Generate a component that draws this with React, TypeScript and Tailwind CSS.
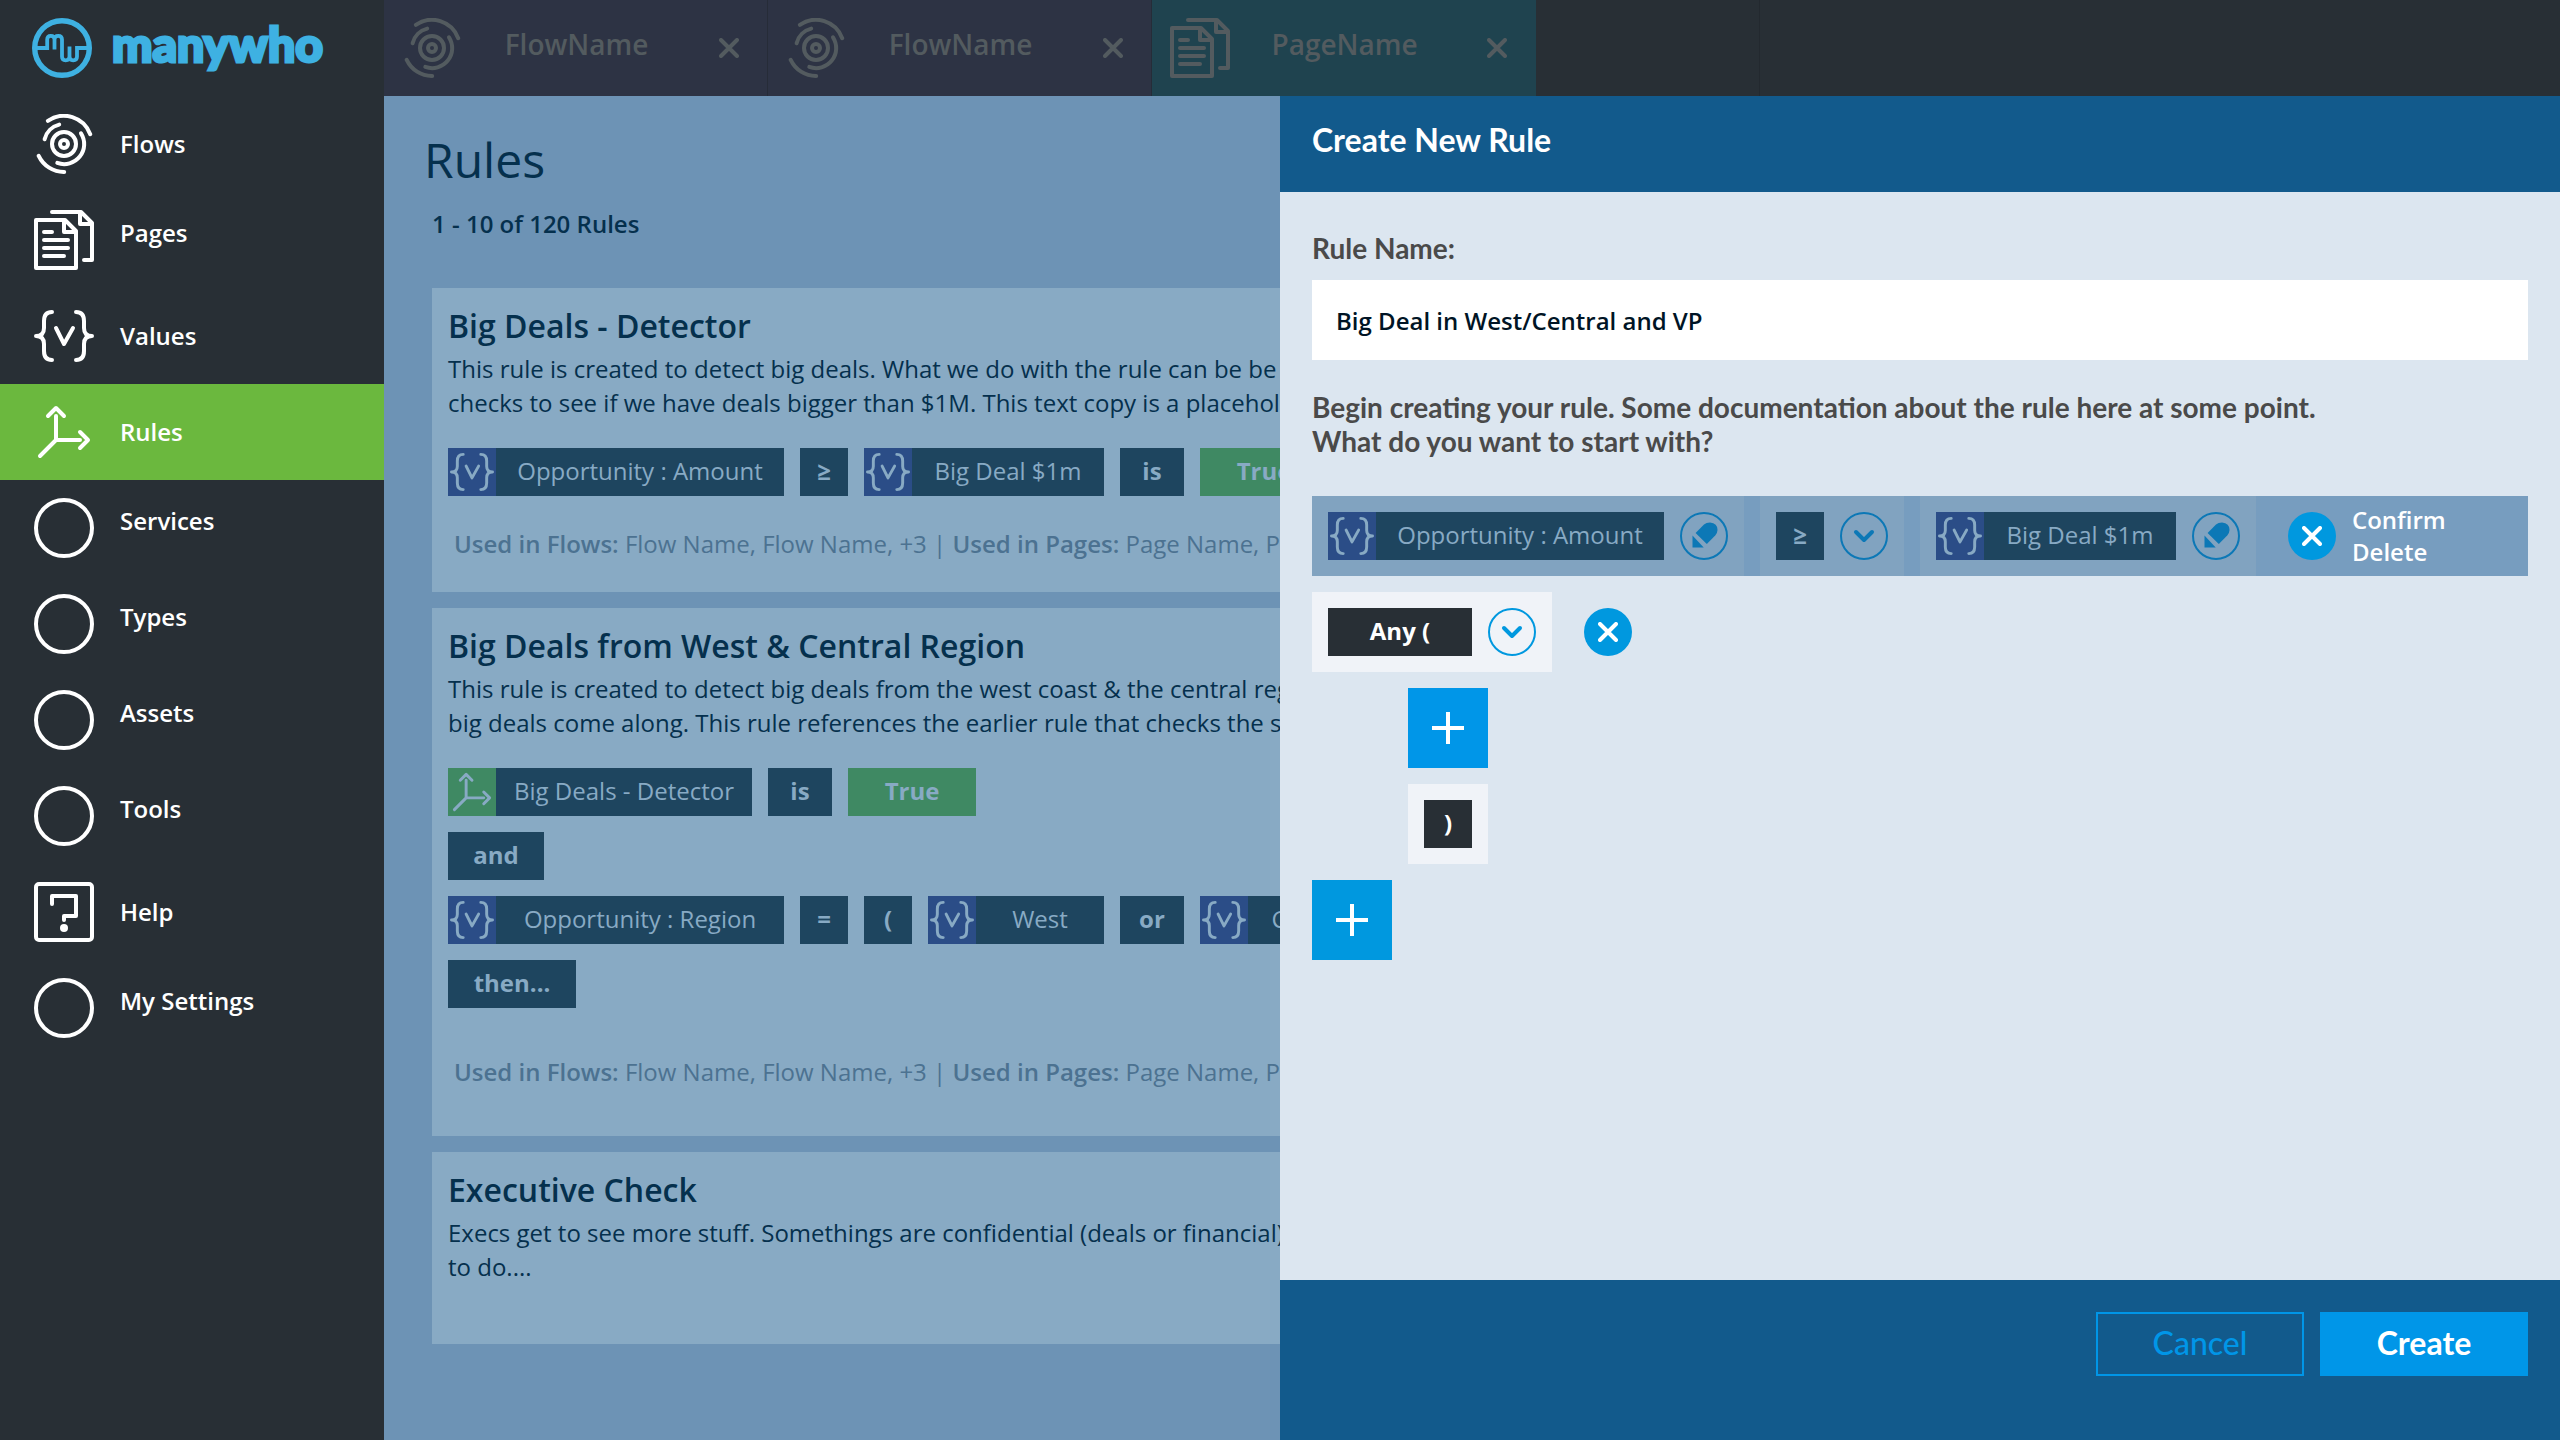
import { useState } from 'react';
import type { ReactNode } from 'react';
import clsx from 'clsx';

type IconProps = { className?: string };

function LineIcon({ className, children }: { className?: string; children: ReactNode }) {
  return (
    <svg
      viewBox="0 0 60 60"
      className={clsx('shrink-0', className)}
      fill="none"
      stroke="currentColor"
      strokeWidth="4"
      strokeLinecap="round"
      strokeLinejoin="round"
      aria-hidden="true"
    >
      {children}
    </svg>
  );
}

function FlowIcon({ className }: IconProps) {
  return (
    <LineIcon className={className}>
      <circle cx="30" cy="30" r="4" />
      <circle cx="30" cy="30" r="12" />
      <path d="M47 19.3A20 20 0 0 1 23.3 48.9" />
      <path d="M25.2 10.6A20 20 0 0 0 10.6 25.2" />
      <path d="M13.9 6.9A28 28 0 0 1 56.2 20.2" />
      <path d="M4.7 41.9A28 28 0 0 0 30.2 58" />
    </LineIcon>
  );
}

function PageIcon({ className }: IconProps) {
  return (
    <LineIcon className={className}>
      <path d="M2 10H31L42 21V58H2Z" />
      <path d="M30 10V22H42" />
      <path d="M10 22H18M10 30H34M10 38H34M10 46H30" />
      <path d="M18 2H47L58 13V50H50" />
      <path d="M46 2V14H58" />
    </LineIcon>
  );
}

function ValueIcon({ className }: IconProps) {
  return (
    <LineIcon className={className}>
      <path d="M18 6C12 6 10 10 10 15V22C10 27 8 30 2 30C8 30 10 33 10 38V45C10 50 12 54 18 54" />
      <path d="M42 6C48 6 50 10 50 15V22C50 27 52 30 58 30C52 30 50 33 50 38V45C50 50 48 54 42 54" />
      <path d="M22 22L30 38L39 22" />
    </LineIcon>
  );
}

function RuleIcon({ className }: IconProps) {
  return (
    <LineIcon className={className}>
      <path d="M22 14V38H46M22 38L6 54" />
      <path d="M14 14L22 6L30 14" />
      <path d="M46 30L54 38L46 46" />
    </LineIcon>
  );
}

function HelpIcon({ className }: IconProps) {
  return (
    <LineIcon className={className}>
      <rect x="2" y="2" width="56" height="56" rx="3" />
      <path d="M18 22V14H42V34H30V38" />
      <circle cx="30" cy="46" r="4" fill="currentColor" stroke="none" />
    </LineIcon>
  );
}

function CircleIcon({ className }: IconProps) {
  return (
    <LineIcon className={className}>
      <circle cx="30" cy="30" r="28" />
    </LineIcon>
  );
}

function LogoMark() {
  return (
    <svg viewBox="0 0 60 60" className="size-[60px] shrink-0" fill="none" stroke="currentColor" aria-hidden="true">
      <circle cx="30" cy="30" r="27.3" strokeWidth="5.4" />
      <path
        d="M5 30H15.2V21.5Q15.2 17.8 18.8 17.8Q22.5 17.8 22.5 21.5V31.5M22.5 21.5Q22.5 17.8 26.2 17.8Q30 17.8 30 21.5V38.5Q30 42.3 33.7 42.3Q37.5 42.3 37.5 38.5V28.5M37.5 38.5Q37.5 42.3 41.2 42.3Q45 42.3 45 38.5V30H55"
        strokeWidth="3.8"
      />
    </svg>
  );
}

function CrossIcon({ className }: IconProps) {
  return (
    <svg viewBox="0 0 20 20" className={className} fill="none" stroke="currentColor" strokeWidth="4" strokeLinecap="round" aria-hidden="true">
      <path d="M2 2L18 18M18 2L2 18" />
    </svg>
  );
}

function PencilIcon() {
  return (
    <svg viewBox="0 0 48 48" className="size-12" fill="currentColor" aria-hidden="true">
      <circle cx="24" cy="24" r="23" fill="none" stroke="currentColor" strokeWidth="2" />
      <path d="M15.6 21L24 12.6Q26.3 10.5 30 10.5Q37.5 11 37.5 18Q37.5 21 35.2 23.4L26.8 32Z" />
      <path d="M12.5 23.5V35.5H23.7Z" />
    </svg>
  );
}

function ChevronIcon() {
  return (
    <svg viewBox="0 0 48 48" className="size-12" fill="none" stroke="currentColor" aria-hidden="true">
      <circle cx="24" cy="24" r="23" strokeWidth="2" />
      <path d="M16 20L24 28L32 20" strokeWidth="4" strokeLinecap="round" strokeLinejoin="round" />
    </svg>
  );
}

// "raised" labels sit slightly above the middle of their row
const navItems = [
  { label: 'Flows', icon: FlowIcon, raised: false },
  { label: 'Pages', icon: PageIcon, raised: true },
  { label: 'Values', icon: ValueIcon, raised: false },
  { label: 'Rules', icon: RuleIcon, raised: false },
  { label: 'Services', icon: CircleIcon, raised: true },
  { label: 'Types', icon: CircleIcon, raised: true },
  { label: 'Assets', icon: CircleIcon, raised: true },
  { label: 'Tools', icon: CircleIcon, raised: true },
  { label: 'Help', icon: HelpIcon, raised: false },
  { label: 'My Settings', icon: CircleIcon, raised: true },
];

const tabs = [
  { id: 1, name: 'FlowName', icon: FlowIcon, page: false },
  { id: 2, name: 'FlowName', icon: FlowIcon, page: false },
  { id: 3, name: 'PageName', icon: PageIcon, page: true },
];

function Sidebar() {
  return (
    <aside className="w-96 shrink-0 bg-[#282f35] text-white">
      <a href="#" className="flex h-24 items-center gap-5 pl-8 text-[#3eb1e2]">
        <LogoMark />
        <span className="pb-2 font-['Lato',sans-serif] text-5xl leading-none font-black [-webkit-text-stroke:3px_#3eb1e2]">manywho</span>
      </a>
      <nav>
        {navItems.map(({ label, icon: Icon, raised }) => (
          <a
            key={label}
            href="#"
            className={clsx('flex h-24 items-center gap-[26px] pl-[34px]', label === 'Rules' && 'bg-[#6bb83e]')}
          >
            <Icon className="size-[60px]" />
            <span className={clsx('text-2xl font-semibold', raised && 'pb-3.5')}>{label}</span>
          </a>
        ))}
      </nav>
    </aside>
  );
}

function TabBar() {
  return (
    <div className="flex h-24 bg-[#282f35] text-[#535b5f]">
      {tabs.map(({ id, name, icon: Icon, page }) => (
        <div
          key={id}
          className={clsx(
            'flex w-96 items-center border-r pr-7 pl-[18px]',
            page ? 'border-[#1f434f] bg-[#1f434f]' : 'border-[#262c38] bg-[#2d3344]'
          )}
        >
          <Icon className="size-[60px]" />
          <button type="button" className="flex-1 pb-2 text-[28px] font-semibold">
            {name}
          </button>
          <button type="button" aria-label="Close tab" className="ml-7">
            <CrossIcon className="size-5" />
          </button>
        </div>
      ))}
      <div className="w-56 border-r border-[#23292f]" />
    </div>
  );
}

function Chip({ children, icon, className }: { children: ReactNode; icon?: 'value' | 'rule'; className: string }) {
  return (
    <span className="flex h-12 shrink-0 bg-[#1e455f] text-2xl text-[#88aac4]">
      {icon && (
        <span className={clsx('flex size-12 items-center justify-center', icon === 'rule' ? 'bg-[#3f8963]' : 'bg-[#2b4d87]')}>
          {icon === 'rule' ? <RuleIcon className="size-11" /> : <ValueIcon className="size-11" />}
        </span>
      )}
      <span className={clsx('flex items-center justify-center pb-0.5', !icon && 'font-bold', className)}>{children}</span>
    </span>
  );
}

function RuleCard({ title, lines, className, children }: { title: string; lines: string[]; className: string; children?: ReactNode }) {
  return (
    <article className={clsx('overflow-hidden bg-[#88aac4] px-4 pt-4', className)}>
      <h2 className="text-[32px] leading-[44px] font-semibold">{title}</h2>
      <p className="mt-1 text-2xl leading-[34px] whitespace-nowrap">
        {lines.map((line) => (
          <span key={line} className="block">
            {line}
          </span>
        ))}
      </p>
      {children}
    </article>
  );
}

function Usage({ className }: { className: string }) {
  return (
    <p className={clsx('pl-1.5 text-2xl leading-8 whitespace-nowrap text-[#4c7291]', className)}>
      <b className="font-semibold">Used in Flows:</b> Flow Name, Flow Name, +3 | <b className="font-semibold">Used in Pages:</b> Page Name, Page Name
    </p>
  );
}

function RulesList() {
  return (
    <main className="flex-1 overflow-hidden bg-[#6d93b5] pt-8 pr-12 pl-12 text-[#05304d]">
      <h1 className="-ml-2 text-5xl leading-[64px]">Rules</h1>
      <p className="mt-4 text-2xl leading-8 font-semibold">1 - 10 of 120 Rules</p>

      <div className="mt-12 flex flex-col gap-4">
        <RuleCard
          title="Big Deals - Detector"
          lines={[
            'This rule is created to detect big deals. What we do with the rule can be be',
            'checks to see if we have deals bigger than $1M. This text copy is a placeholder',
          ]}
          className="pb-8"
        >
          <div className="mt-7 flex gap-4">
            <Chip icon="value" className="w-72">Opportunity : Amount</Chip>
            <Chip className="w-12">≥</Chip>
            <Chip icon="value" className="w-48">Big Deal $1m</Chip>
            <Chip className="w-16">is</Chip>
            <Chip className="w-32 bg-[#3f8963]">True</Chip>
          </div>
          <Usage className="mt-8" />
        </RuleCard>

        <RuleCard
          title="Big Deals from West & Central Region"
          lines={[
            'This rule is created to detect big deals from the west coast & the central region',
            'big deals come along. This rule references the earlier rule that checks the size',
          ]}
          className="pb-12"
        >
          <div className="mt-7 flex flex-col gap-4">
            <div className="flex gap-4">
              <Chip icon="rule" className="w-64">Big Deals - Detector</Chip>
              <Chip className="w-16">is</Chip>
              <Chip className="w-32 bg-[#3f8963]">True</Chip>
            </div>
            <div className="flex">
              <Chip className="w-24">and</Chip>
            </div>
            <div className="flex gap-4">
              <Chip icon="value" className="w-72">Opportunity : Region</Chip>
              <Chip className="w-12">=</Chip>
              <Chip className="w-12">(</Chip>
              <Chip icon="value" className="w-32">West</Chip>
              <Chip className="w-16">or</Chip>
              <Chip icon="value" className="w-32">Central</Chip>
            </div>
            <div className="flex">
              <Chip className="w-32">then...</Chip>
            </div>
          </div>
          <Usage className="mt-12" />
        </RuleCard>

        <RuleCard
          title="Executive Check"
          lines={['Execs get to see more stuff. Somethings are confidential (deals or financial)', 'to do....']}
          className="pb-15"
        />
      </div>
    </main>
  );
}

function DeleteButton() {
  return (
    <button type="button" aria-label="Delete" className="flex size-12 shrink-0 items-center justify-center rounded-full bg-[#0098df] text-white">
      <CrossIcon className="size-5" />
    </button>
  );
}

function AddButton({ className }: { className?: string }) {
  return (
    <button type="button" aria-label="Add" className={clsx('flex size-20 items-center justify-center text-white', className)}>
      <svg viewBox="0 0 32 32" className="size-8" stroke="currentColor" strokeWidth="4" aria-hidden="true">
        <path d="M16 0V32M0 16H32" />
      </svg>
    </button>
  );
}

function CreateRulePanel() {
  const [name, setName] = useState('Big Deal in West/Central and VP');

  return (
    <section className="absolute top-24 right-0 bottom-0 flex w-1/2 flex-col bg-[#dce6f0]">
      <header className="flex h-24 items-center bg-[#125a8c] pb-2 pl-8 text-white">
        <h2 className="font-['Lato',sans-serif] text-[32px] font-bold">Create New Rule</h2>
      </header>

      <div className="flex flex-1 flex-col px-8 pt-10">
        <label htmlFor="rule-name" className="font-['Lato',sans-serif] text-[28px] leading-8 font-bold text-[#4a4a4a]">
          Rule Name:
        </label>
        <input
          id="rule-name"
          type="text"
          value={name}
          onChange={(e) => setName(e.target.value)}
          className="mt-4 h-20 w-full bg-white px-6 text-2xl font-semibold text-[#001425] outline-none"
        />
        <p className="mt-[30px] font-['Lato',sans-serif] text-[28px] leading-[34px] font-bold text-[#4a4a4a]">
          Begin creating your rule. Some documentation about the rule here at some point.
          <br />
          What do you want to start with?
        </p>

        {/* Condition waiting for its delete to be confirmed */}
        <div className="mt-[38px] flex h-20 gap-4 bg-[#779dbf] text-[#0c78b6]">
          <div className="flex items-center gap-4 bg-[#81a3c0] px-4">
            <Chip icon="value" className="w-72">Opportunity : Amount</Chip>
            <button type="button" aria-label="Edit value">
              <PencilIcon />
            </button>
          </div>
          <div className="flex items-center gap-4 bg-[#81a3c0] px-4">
            <Chip className="w-12">≥</Chip>
            <button type="button" aria-label="Change operator">
              <ChevronIcon />
            </button>
          </div>
          <div className="flex items-center gap-4 bg-[#81a3c0] px-4">
            <Chip icon="value" className="w-48">Big Deal $1m</Chip>
            <button type="button" aria-label="Edit value">
              <PencilIcon />
            </button>
          </div>
          <div className="flex items-center gap-4 pl-4">
            <DeleteButton />
            <span className="w-32 text-2xl leading-8 font-semibold text-white">Confirm Delete</span>
          </div>
        </div>

        <div className="mt-4 flex items-center gap-8">
          <div className="flex h-20 items-center gap-4 bg-[#f0f3f8] px-4 text-[#0098df]">
            <span className="flex h-12 w-36 items-center justify-center bg-[#282f35] pb-0.5 text-2xl font-bold text-white">Any (</span>
            <button type="button" aria-label="Change group">
              <ChevronIcon />
            </button>
          </div>
          <DeleteButton />
        </div>
        <div className="mt-4 flex flex-col gap-4 pl-24">
          <AddButton className="bg-[#0096e8]" />
          <div className="flex size-20 items-center justify-center bg-[#f0f3f8]">
            <span className="flex size-12 items-center justify-center bg-[#282f35] pb-0.5 text-2xl font-bold text-white">)</span>
          </div>
        </div>
        <AddButton className="mt-4 bg-[#0098df]" />
      </div>

      <footer className="flex h-40 justify-end gap-4 bg-[#125a8c] pt-8 pr-8 font-['Lato',sans-serif] text-[32px]">
        <button type="button" className="h-16 w-52 border-2 border-[#0096e8] pb-0.5 font-medium text-[#0096e8]">
          Cancel
        </button>
        <button type="button" className="h-16 w-52 bg-[#0096e8] pb-0.5 font-bold text-white">
          Create
        </button>
      </footer>
    </section>
  );
}

export default function App() {
  return (
    <div className="relative flex min-h-screen overflow-hidden font-['Open_Sans',sans-serif]">
      <Sidebar />
      <div className="flex min-w-0 flex-1 flex-col">
        <TabBar />
        <RulesList />
      </div>
      <CreateRulePanel />
    </div>
  );
}
